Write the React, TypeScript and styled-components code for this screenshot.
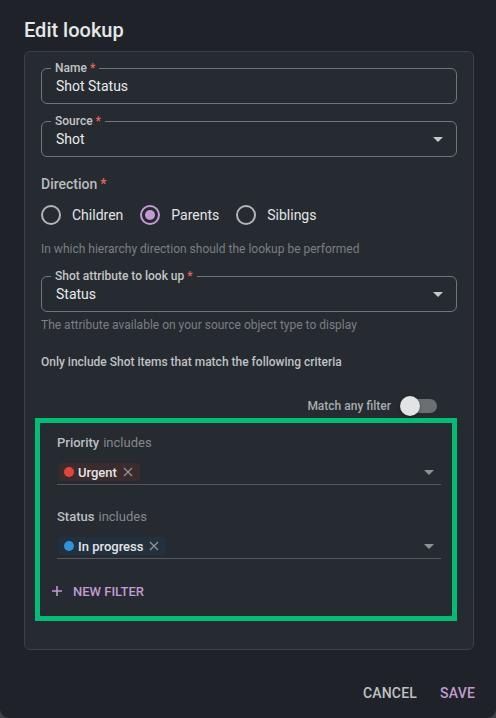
import React from "react";
import styled, { createGlobalStyle } from "styled-components";

const GlobalStyle = createGlobalStyle`
  html, body {
    margin: 0;
    padding: 0;
    background: #3d4045;
  }
  body {
    font-family: Roboto, "Noto Sans", "Liberation Sans", sans-serif;
    -webkit-font-smoothing: antialiased;
  }
  * { box-sizing: border-box; }
`;

const Dialog = styled.div`
  width: 496px;
  height: 718px;
  background: #1f2329;
  border-radius: 0 0 9px 9px;
  padding: 0 22px 0 24px;
  display: flex;
  flex-direction: column;
`;

const Title = styled.h2`
  margin: 0;
  padding: 14px 0 5px;
  font-size: 20px;
  line-height: 32px;
  font-weight: 500;
  color: #e6e7e8;
`;

const Panel = styled.div`
  border: 1px solid #3b4046;
  border-radius: 6px;
  background: #262b31;
  padding: 10px 16px 28px;
  display: flex;
  flex-direction: column;
`;

const OutlinedField = styled.fieldset<{ $gap?: number }>`
  margin: ${({ $gap }) => $gap ?? 0}px 0 0;
  padding: 0 6px 7px 14px;
  border: 1px solid #72767b;
  border-radius: 6px;
  min-width: 0;
`;

const FieldLegend = styled.legend`
  margin-left: -5px;
  padding: 0 4px;
  font-size: 12px;
  line-height: 12px;
  font-weight: 500;
  color: #c3c5c7;
`;

const Required = styled.span`
  color: #e8645e;
  margin-left: 3px;
`;

const FieldValue = styled.div`
  display: flex;
  align-items: center;
  justify-content: space-between;
  padding-top: 2px;
  height: 22px;
  font-size: 14px;
  line-height: 20px;
  color: #e9eaeb;
`;

const Arrow = styled.svg<{ $dim?: boolean }>`
  width: 24px;
  height: 24px;
  flex-shrink: 0;
  display: block;
  margin: ${({ $dim }) => ($dim ? "-3px 0" : "-2px 0")};
  fill: ${({ $dim }) => ($dim ? "#8e9194" : "#c7c9cb")};
`;

const SectionLabel = styled.div`
  margin-top: 17px;
  font-size: 14px;
  line-height: 20px;
  font-weight: 500;
  color: #b9bbbd;
`;

const RadioRow = styled.div`
  display: flex;
  align-items: center;
  height: 42px;
  gap: 17px;
`;

const RadioOption = styled.label`
  display: flex;
  align-items: center;
  gap: 11px;
  font-size: 14px;
  line-height: 20px;
  color: #e3e4e5;
`;

const RadioCircle = styled.span<{ $checked?: boolean }>`
  width: 20px;
  height: 20px;
  border-radius: 50%;
  border: 2px solid ${({ $checked }) => ($checked ? "#c49ad4" : "#b3b5b7")};
  display: flex;
  align-items: center;
  justify-content: center;
  &::after {
    content: "";
    width: 10px;
    height: 10px;
    border-radius: 50%;
    background: ${({ $checked }) => ($checked ? "#c49ad4" : "transparent")};
  }
`;

const HelperText = styled.div`
  margin-top: 3px;
  font-size: 12px;
  line-height: 20px;
  color: #7b7e82;
`;

const CriteriaText = styled.div`
  margin-top: 19px;
  font-size: 12px;
  line-height: 16px;
  font-weight: 500;
  color: #bfc1c3;
`;

const SwitchRow = styled.div`
  margin-top: 24px;
  height: 24px;
  display: flex;
  align-items: center;
  justify-content: flex-end;
  gap: 9px;
  padding-right: 20px;
  font-size: 12px;
  font-weight: 500;
  color: #a9abae;
`;

const SwitchControl = styled.span`
  position: relative;
  width: 37px;
  height: 20px;
  display: flex;
  align-items: center;
`;

const SwitchTrack = styled.span`
  width: 34px;
  height: 14px;
  margin-left: 3px;
  border-radius: 7px;
  background: #6b6e72;
`;

const SwitchThumb = styled.span`
  position: absolute;
  left: 0;
  top: 0;
  width: 20px;
  height: 20px;
  border-radius: 50%;
  background: #e2e3e4;
  box-shadow: 0 1px 3px rgba(0, 0, 0, 0.4);
`;

const FilterBox = styled.div`
  margin-left: -6px;
  border: 5px solid #03bd76;
  padding: 12px 11px 15px 17px;
  display: flex;
  flex-direction: column;
`;

const FilterLabel = styled.div<{ $gap?: number }>`
  margin-top: ${({ $gap }) => $gap ?? 0}px;
  font-size: 13px;
  line-height: 16px;
  font-weight: 500;
  color: #bcbec0;
  & > span {
    font-weight: 400;
    color: #85888c;
    margin-left: 4px;
  }
`;

const FilterSelect = styled.div`
  margin-top: 8px;
  padding: 4px 0 3px 2px;
  border-bottom: 1px solid #55595e;
  display: flex;
  align-items: center;
  justify-content: space-between;
`;

const Chip = styled.span<{ $tint: string }>`
  display: inline-flex;
  align-items: center;
  height: 18px;
  padding: 0 7px 0 5px;
  border-radius: 3px;
  background: ${({ $tint }) => $tint};
  font-size: 13px;
  font-weight: 500;
  color: #e4e5e6;
`;

const Dot = styled.span<{ $color: string }>`
  width: 10px;
  height: 10px;
  border-radius: 50%;
  background: ${({ $color }) => $color};
  margin-right: 4px;
`;

const ChipRemove = styled.svg`
  width: 10px;
  height: 10px;
  margin-left: 6px;
  stroke: #8d9094;
  stroke-width: 1.4;
`;

const AddFilterButton = styled.button`
  margin: 22px 0 0 -5px;
  align-self: flex-start;
  display: flex;
  align-items: center;
  gap: 11px;
  height: 20px;
  padding: 0;
  border: none;
  background: none;
  font-family: inherit;
  font-size: 13px;
  font-weight: 500;
  text-transform: uppercase;
  color: #c19bd1;
  svg {
    width: 10px;
    height: 10px;
    stroke: #c19bd1;
    stroke-width: 1.6;
  }
`;

const Actions = styled.div`
  margin: 25px -9px 0 0;
  display: flex;
  justify-content: flex-end;
  gap: 7px;
`;

const TextButton = styled.button<{ $primary?: boolean }>`
  height: 36px;
  padding: 6px 8px;
  border: none;
  background: none;
  font-family: inherit;
  font-size: 14px;
  font-weight: 500;
  letter-spacing: 0.2px;
  text-transform: uppercase;
  color: ${({ $primary }) => ($primary ? "#c19bd1" : "#bfc1c3")};
`;

const DropArrow = ({ dim }: { dim?: boolean }) => (
  <Arrow $dim={dim} viewBox="0 0 24 24">
    <path d="M7 10l5 5 5-5z" />
  </Arrow>
);

const Cross = () => (
  <ChipRemove viewBox="0 0 10 10" fill="none">
    <path d="M1 1l8 8M9 1l-8 8" />
  </ChipRemove>
);

const filters = [
  { field: "Priority", value: "Urgent", dot: "#e5443a", tint: "#3a2b2e", gap: 0 },
  { field: "Status", value: "In progress", dot: "#2f93dc", tint: "#23313f", gap: 24 },
];

const directions = ["Children", "Parents", "Siblings"];

export default function App() {
  return (
    <>
      <GlobalStyle />
      <Dialog>
        <Title>Edit lookup</Title>
        <Panel>
          <OutlinedField>
            <FieldLegend>
              Name<Required>*</Required>
            </FieldLegend>
            <FieldValue>Shot Status</FieldValue>
          </OutlinedField>
          <OutlinedField $gap={11}>
            <FieldLegend>
              Source<Required>*</Required>
            </FieldLegend>
            <FieldValue>
              Shot
              <DropArrow />
            </FieldValue>
          </OutlinedField>

          <SectionLabel>
            Direction<Required>*</Required>
          </SectionLabel>
          <RadioRow>
            {directions.map((d) => (
              <RadioOption key={d}>
                <RadioCircle $checked={d === "Parents"} />
                {d}
              </RadioOption>
            ))}
          </RadioRow>
          <HelperText>In which hierarchy direction should the lookup be performed</HelperText>

          <OutlinedField $gap={11}>
            <FieldLegend>
              Shot attribute to look up<Required>*</Required>
            </FieldLegend>
            <FieldValue>
              Status
              <DropArrow />
            </FieldValue>
          </OutlinedField>
          <HelperText>The attribute available on your source object type to display</HelperText>

          <CriteriaText>Only include Shot items that match the following criteria</CriteriaText>

          <SwitchRow>
            Match any filter
            <SwitchControl>
              <SwitchTrack />
              <SwitchThumb />
            </SwitchControl>
          </SwitchRow>

          <FilterBox>
            {filters.map((f) => (
              <React.Fragment key={f.field}>
                <FilterLabel $gap={f.gap}>
                  {f.field}
                  <span>includes</span>
                </FilterLabel>
                <FilterSelect>
                  <Chip $tint={f.tint}>
                    <Dot $color={f.dot} />
                    {f.value}
                    <Cross />
                  </Chip>
                  <DropArrow dim />
                </FilterSelect>
              </React.Fragment>
            ))}
            <AddFilterButton>
              <svg viewBox="0 0 10 10" fill="none">
                <path d="M5 0v10M0 5h10" />
              </svg>
              New filter
            </AddFilterButton>
          </FilterBox>
        </Panel>
        <Actions>
          <TextButton>Cancel</TextButton>
          <TextButton $primary>Save</TextButton>
        </Actions>
      </Dialog>
    </>
  );
}
